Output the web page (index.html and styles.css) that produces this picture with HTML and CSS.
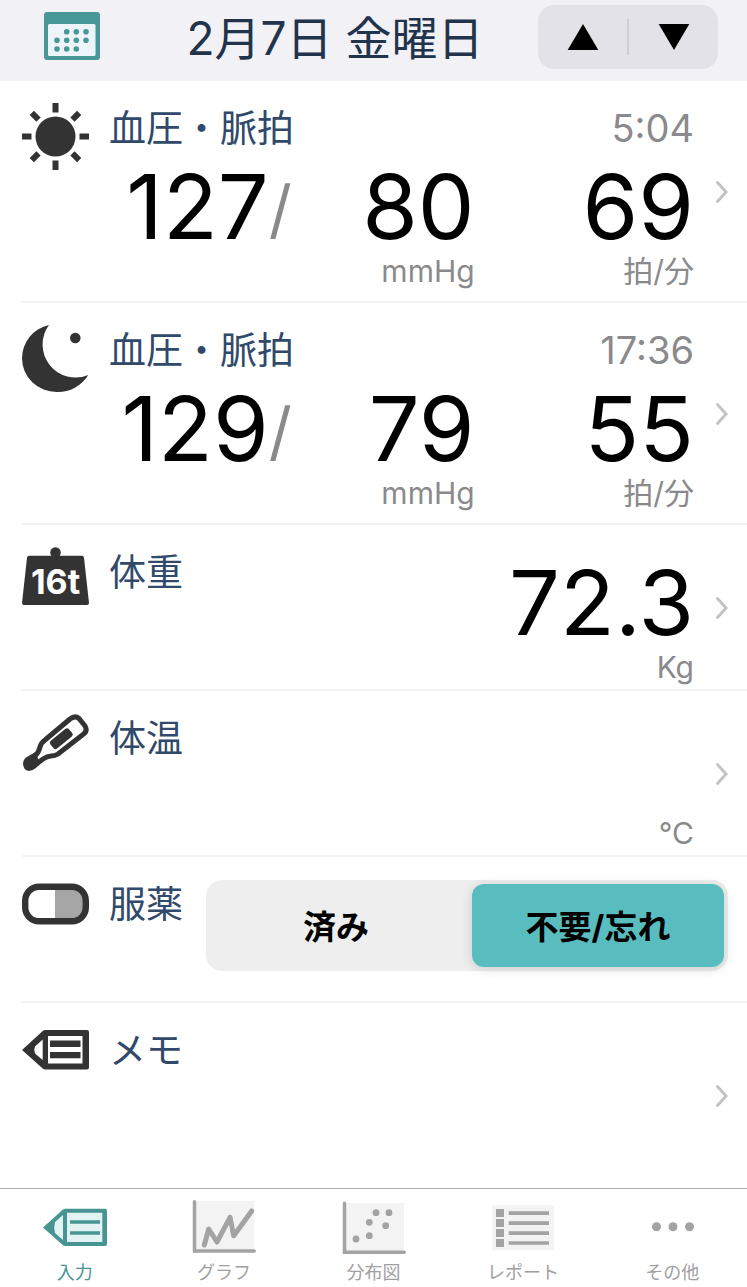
FILE: index.html
```
<!DOCTYPE html>
<html lang="ja">
<head>
    <meta charset="UTF-8">
    <meta name="viewport" content="width=device-width, initial-scale=1.0">
    <title>血圧ノート</title>
    <link rel="stylesheet" href="styles.css">
</head>
<body>
    <header class="header">
        <button class="calendar" type="button" aria-label="カレンダー">
            <svg width="56" height="48" viewBox="0 0 56 48">
                <rect width="56" height="48" rx="3" fill="#479896"/>
                <rect x="4" y="12" width="47.5" height="32" rx="1.5" fill="#eef5fa"/>
                <g fill="#479896">
                    <circle cx="22.7" cy="19.7" r="2.8"/><circle cx="32.3" cy="19.7" r="2.8"/><circle cx="42" cy="19.7" r="2.8"/>
                    <circle cx="13" cy="28.3" r="2.8"/><circle cx="22.7" cy="28.3" r="2.8"/><circle cx="32.3" cy="28.3" r="2.8"/><circle cx="42" cy="28.3" r="2.8"/>
                    <circle cx="13" cy="37" r="2.8"/><circle cx="22.7" cy="37" r="2.8"/><circle cx="32.3" cy="37" r="2.8"/>
                </g>
            </svg>
        </button>
        <h1 class="date">2月7日 金曜日</h1>
        <div class="stepper">
            <button type="button" aria-label="前の日">
                <svg width="32" height="26" viewBox="0 0 32 26"><path d="M16 0L31.300 26H.7z"/></svg>
            </button>
            <button type="button" aria-label="次の日">
                <svg width="32" height="26" viewBox="0 0 32 26"><path d="M16 26L31.300 0H.7z"/></svg>
            </button>
        </div>
    </header>

    <main class="list">
        <a class="row" href="#morning">
            <svg class="icon" width="67" height="67" viewBox="-33.5 -33.5 67 67">
                <circle r="20"/>
                <path d="M-3-33.500h6v9.500h-6zM-3 24h6v9.500h-6zM-33.500-3h9.500v6h-9.500zM24-3h9.500v6H24z"/>
                <path transform="rotate(45)" d="M-3-33.500h6v9.500h-6zM-3 24h6v9.500h-6zM-33.500-3h9.500v6h-9.500zM24-3h9.500v6H24z"/>
            </svg>
            <div class="body">
                <div class="top">
                    <span class="label">血圧・脈拍</span>
                    <span class="time">5:04</span>
                </div>
                <div class="readings">
                    <div class="reading"><span class="value">127<span class="slash">/</span></span></div>
                    <div class="reading"><span class="value">80</span><span class="unit">mmHg</span></div>
                    <div class="reading"><span class="value">69</span><span class="unit">拍/分</span></div>
                </div>
            </div>
            <svg class="chevron" width="12" height="22" viewBox="0 0 12 22"><path d="M1.500 1.500L10 11l-8.500 9.500"/></svg>
        </a>

        <a class="row" href="#night">
            <svg class="icon" width="67" height="67" viewBox="0 0 67 67">
                <path d="M27 0A34 34 0 0 0 0 33 34.500 34 0 0 0 35 67 36 36 0 0 0 66.300 50 33 33 0 0 1 27 0z"/>
                <circle cx="53.300" cy="13" r="5.300"/>
            </svg>
            <div class="body">
                <div class="top">
                    <span class="label">血圧・脈拍</span>
                    <span class="time">17:36</span>
                </div>
                <div class="readings">
                    <div class="reading"><span class="value">129<span class="slash">/</span></span></div>
                    <div class="reading"><span class="value">79</span><span class="unit">mmHg</span></div>
                    <div class="reading"><span class="value">55</span><span class="unit">拍/分</span></div>
                </div>
            </div>
            <svg class="chevron" width="12" height="22" viewBox="0 0 12 22"><path d="M1.500 1.500L10 11l-8.500 9.500"/></svg>
        </a>

        <a class="row" href="#weight">
            <svg class="icon" width="67" height="58" viewBox="0 0 67 58">
                <circle cx="33.500" cy="5.500" r="5.300"/>
                <path d="M7 8.700h53q1.700 0 2 2L67 56q0 2-2 2H2q-2 0-2-2L5 10.700q.3-2 2-2z"/>
                <text class="ton" x="33.500" y="47" text-anchor="middle">16t</text>
            </svg>
            <div class="body single">
                <span class="label">体重</span>
                <div class="reading"><span class="value">72.3</span><span class="unit">Kg</span></div>
            </div>
            <svg class="chevron" width="12" height="22" viewBox="0 0 12 22"><path d="M1.500 1.500L10 11l-8.500 9.500"/></svg>
        </a>

        <a class="row" href="#temperature">
            <svg class="icon" width="67" height="58" viewBox="0 -1 67 58">
                <path d="M13 42Q17 38 18 33 19 29 23 26L48 5Q53 1 57 4.500L63 12Q66 17 61 20.500L36 40Q33 42 29 42 25 42 21 45L12 52" fill="none" stroke="#333" stroke-width="5"/>
                <path d="M1 49Q1 46 4 43.500L13.500 38 17 47 14 54Q10 57 7 57 1 56 1 49z"/>
                <rect x="-12" y="-5" width="24" height="10" rx="2.500" transform="translate(39.300 24.700) rotate(-39)"/>
            </svg>
            <div class="body single">
                <span class="label">体温</span>
                <div class="reading"><span class="value"></span><span class="unit">°C</span></div>
            </div>
            <svg class="chevron" width="12" height="22" viewBox="0 0 12 22"><path d="M1.500 1.500L10 11l-8.500 9.500"/></svg>
        </a>

        <div class="row medicine">
            <svg class="icon" width="67" height="50" viewBox="0 -4.5 67 50">
                <path d="M33 3h17q14 2 14 17.500T50 38H33z" fill="#a6a6a6"/>
                <rect x="3.200" y="3.200" width="60.600" height="34.600" rx="14" fill="none" stroke="#333" stroke-width="6.400"/>
            </svg>
            <span class="label">服薬</span>
            <div class="segment" role="radiogroup" aria-label="服薬">
                <input type="radio" name="medicine" id="taken">
                <label for="taken">済み</label>
                <input type="radio" name="medicine" id="skipped" checked>
                <label for="skipped">不要/忘れ</label>
            </div>
        </div>

        <a class="row memo" href="#memo">
            <svg class="icon" width="67" height="50" viewBox="0 -5 67 50">
                <path fill-rule="evenodd" d="M0 20L21 .8Q22 0 23 0H65q2 0 2 2V37.500q0 2-2 2H23q-1 0-2-.8zM26 6V33.500H60.500V6zM20.700 9.500L13 16.500Q11.500 20 13 23.500L20.700 30z"/>
                <path d="M28 10.500h30.500V17H28zM28 22h30.500v6.300H28z"/>
            </svg>
            <div class="body single">
                <span class="label">メモ</span>
            </div>
            <svg class="chevron" width="12" height="22" viewBox="0 0 12 22"><path d="M1.500 1.500L10 11l-8.500 9.500"/></svg>
        </a>
    </main>

    <nav class="tabs">
        <a class="tab active" href="#input">
            <svg width="64" height="54" viewBox="0 0 64 54">
                <path d="M0 27.500L20 9.600q1-.8 2-.8H62q2 0 2 2V44q0 2-2 2H22q-1 0-2-.8z" fill="#479593"/>
                <path d="M24 12.800h35.300V42H24zM20 15l-8 7q-1.500 5.500 0 11l8 7z" fill="#e3f3f3"/>
                <path d="M27 22h30M27 33h30" stroke="#479593" stroke-width="3.400"/>
            </svg>
            <span>入力</span>
        </a>
        <a class="tab" href="#graph">
            <svg width="64" height="54" viewBox="0 0 64 54">
                <path d="M3 1h59v50H3z" fill="#f3f3f3"/>
                <path d="M2.500 1.800V51H62.200" class="axis"/>
                <path d="M12.300 45l4.400-16L25 42l13-24.700 3.700 18.400L59.700 11" class="trend"/>
            </svg>
            <span>グラフ</span>
        </a>
        <a class="tab" href="#scatter">
            <svg width="64" height="54" viewBox="0 0 64 54">
                <path d="M3 3h59v49H3z" fill="#f3f3f3"/>
                <path d="M2.500 3.300V52.300H62.200" class="axis"/>
                <g fill="#a3a3a3">
                    <circle cx="14" cy="39" r="3.400"/><circle cx="27.300" cy="35.700" r="3.400"/><circle cx="27.300" cy="22.300" r="3.400"/>
                    <circle cx="34" cy="12.700" r="3.400"/><circle cx="47" cy="12.700" r="3.400"/><circle cx="43.700" cy="25.700" r="3.400"/>
                </g>
            </svg>
            <span>分布図</span>
        </a>
        <a class="tab" href="#report">
            <svg width="64" height="54" viewBox="0 0 64 54">
                <path d="M1.300 5.300H63v45H1.300z" fill="#f3f3f3"/>
                <path d="M5 9h8v8H5zM5 19h8v8H5zM5 29h8v8H5zM5 39h8v8H5z" fill="#a3a3a3"/>
                <path d="M17.700 13.200H58M17.700 23.200H58M17.700 33.200H58M17.700 43H58" stroke="#a3a3a3" stroke-width="3.700"/>
            </svg>
            <span>レポート</span>
        </a>
        <a class="tab" href="#more">
            <svg width="64" height="54" viewBox="0 0 64 54" fill="#a3a3a3">
                <circle cx="16.500" cy="26.700" r="4.500"/><circle cx="33" cy="26.700" r="4.500"/><circle cx="49.500" cy="26.700" r="4.500"/>
            </svg>
            <span>その他</span>
        </a>
    </nav>
</body>
</html>
```
FILE: styles.css
```
* {
    box-sizing: border-box;
}
body {
    margin: 0;
    min-height: 100vh;
    display: flex;
    flex-direction: column;
    font-family: Inter, "Noto Sans CJK JP", sans-serif;
    background-color: #fff;
    color: #000;
}
a {
    color: inherit;
    text-decoration: none;
}
button {
    border: none;
    padding: 0;
    background: none;
    cursor: pointer;
}
svg {
    display: block;
    flex-shrink: 0;
    overflow: visible;
}

/* header */
.header {
    display: flex;
    align-items: center;
    padding: 5px 29px 12px 22px;
    background-color: #f2f1f6;
}
.calendar {
    padding: 0 32px 2px 22px;
}
.date {
    flex: 1;
    margin: 0;
    padding-top: 2px;
    text-align: center;
    font-size: 46px;
    line-height: 62px;
    font-weight: 400;
    color: #22344c;
    white-space: nowrap;
}
.stepper {
    display: flex;
    align-items: center;
    width: 180px;
    height: 64px;
    border-radius: 16px;
    background-color: #e3e2e8;
}
.stepper button {
    flex: 1;
    display: flex;
    justify-content: center;
    align-items: center;
    height: 36px;
}
.stepper button:first-child {
    border-right: 2px solid #cfced4;
}

/* rows */
.list {
    flex: 1;
    display: flex;
    flex-direction: column;
    padding-left: 22px;
}
.row {
    display: flex;
    align-items: flex-start;
    padding: 21px 19px 0 0;
    border-bottom: 2px solid #f2f2f2;
}
.icon {
    margin: 1px 20px 0 0;
    fill: #333;
}
.ton {
    font-size: 34px;
    font-weight: 700;
    fill: #fff;
}
.body {
    flex: 1;
    padding-bottom: 12px;
}
.top, .single {
    display: flex;
    justify-content: space-between;
}
.single {
    padding-bottom: 4px;
}
.single .reading {
    padding-top: 11px;
}
.label {
    font-size: 37px;
    line-height: 54px;
    color: #31496b;
    white-space: nowrap;
}
.time {
    font-size: 38px;
    line-height: 52px;
    color: #8a8a8d;
}
.readings {
    display: grid;
    grid-template-columns: 5fr 5fr 6fr;
    padding-top: 5px;
}
.reading {
    display: flex;
    flex-direction: column;
    align-items: flex-end;
}
.value {
    height: 92px;
    font-size: 90px;
    line-height: 92px;
}
.slash {
    font-size: 64px;
    line-height: 64px;
    vertical-align: 7px;
    color: #8a8a8d;
}
.unit {
    font-size: 30px;
    line-height: 36px;
    color: #8a8a8d;
}
.chevron {
    align-self: center;
    margin: 0 0 20px 22px;
    fill: none;
    stroke: #c4c4c6;
    stroke-width: 3;
    stroke-linecap: round;
}

/* medicine */
.medicine {
    padding-bottom: 30px;
}
.segment {
    flex: 1;
    display: grid;
    grid-template-columns: 1fr 1fr;
    gap: 10px;
    margin: 2px 0 0 23px;
    padding: 4px;
    border-radius: 16px;
    background-color: #eee;
}
.segment input {
    position: absolute;
    opacity: 0;
    pointer-events: none;
}
.segment label {
    padding-top: 3px;
    border-radius: 12px;
    text-align: center;
    font-size: 33px;
    line-height: 80px;
    font-weight: 700;
    cursor: pointer;
}
.segment input:checked + label {
    background-color: #59bdc0;
    box-shadow: 0 2px 12px rgba(0, 0, 0, 0.14);
}
.memo {
    flex: 1;
    border-bottom: none;
}

/* tab bar */
.tabs {
    display: flex;
    border-top: 1px solid #b0b0b0;
}
.tab {
    flex: 1;
    display: flex;
    flex-direction: column;
    align-items: center;
    gap: 6px;
    padding: 11px 0 1px;
    font-size: 18px;
    line-height: 26px;
    color: #a0a0a0;
}
.tab.active {
    color: #479593;
}
.axis {
    fill: none;
    stroke: #a3a3a3;
    stroke-width: 3.5;
    stroke-linecap: round;
}
.trend {
    fill: none;
    stroke: #a3a3a3;
    stroke-width: 5;
    stroke-linecap: round;
    stroke-linejoin: round;
}
```
